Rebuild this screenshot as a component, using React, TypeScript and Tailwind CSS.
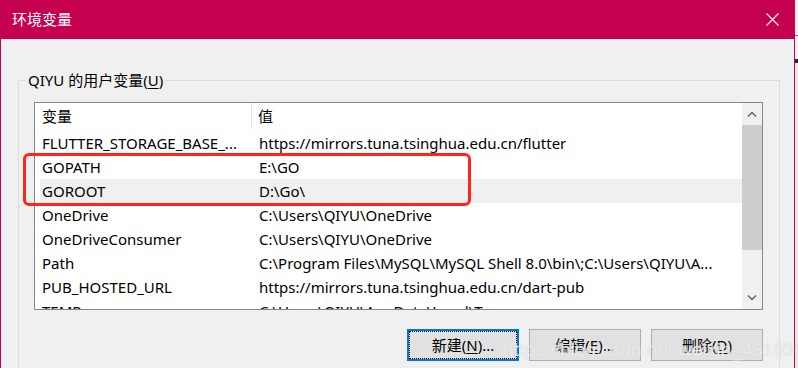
import React from "react";

const rows: { name: string; value: string }[] = [
  { name: "FLUTTER_STORAGE_BASE_...", value: "https://mirrors.tuna.tsinghua.edu.cn/flutter" },
  { name: "GOPATH", value: "E:\\GO" },
  { name: "GOROOT", value: "D:\\Go\\" },
  { name: "OneDrive", value: "C:\\Users\\QIYU\\OneDrive" },
  { name: "OneDriveConsumer", value: "C:\\Users\\QIYU\\OneDrive" },
  { name: "Path", value: "C:\\Program Files\\MySQL\\MySQL Shell 8.0\\bin\\;C:\\Users\\QIYU\\A..." },
  { name: "PUB_HOSTED_URL", value: "https://mirrors.tuna.tsinghua.edu.cn/dart-pub" },
  { name: "TEMP", value: "C:\\Users\\QIYU\\AppData\\Local\\Temp" },
];

const font = "font-['Noto_Sans','Noto_Sans_CJK_SC',sans-serif]";

function Button({ label, focused }: { label: React.ReactNode; focused?: boolean }) {
  return (
    <button
      className={`w-[112px] h-[32px] bg-[#e1e1e1] text-[15px] text-black flex items-center justify-center ${
        focused ? "border-2 border-[#0078d7]" : "border border-[#adadad]"
      }`}
    >
      <span
        className={`flex items-center justify-center w-full h-full ${
          focused ? "border border-dotted border-black" : ""
        }`}
      >
        {label}
      </span>
    </button>
  );
}

export default function App() {
  return (
    <div className={`w-[798px] h-[368px] overflow-hidden flex bg-[#e6e6e6] ${font}`}>
      {/* dialog window */}
      <div className="w-[795px] h-full flex flex-col border-x border-[#c4004f] bg-[#f0f0f0]">
        {/* title bar */}
        <div className="h-[39px] shrink-0 bg-[#c4004f] flex items-center justify-between pl-[11px] pr-[14px]">
          <span className="text-white text-[15px] leading-none">环境变量</span>
          <svg width="13" height="13" viewBox="0 0 13 13" className="mr-[1px]">
            <path d="M0.5 0.5 L12.5 12.5 M12.5 0.5 L0.5 12.5" stroke="white" strokeWidth="1.1" />
          </svg>
        </div>

        {/* group box */}
        <div className="relative ml-[17px] mr-[14px] mt-[41px] border border-[#dcdcdc] border-b-0 flex-1 pl-[15px] pr-[16px] pt-[21px]">
          <span className="absolute left-[7px] top-[-12px] px-[2px] bg-[#f0f0f0] text-[15px] leading-[22px] text-black">
            QIYU 的用户变量(<span className="underline underline-offset-2">U</span>)
          </span>

          {/* list */}
          <div className="h-[208px] border border-[#828790] bg-white flex overflow-hidden">
            <div className="flex-1 pl-[5px] flex flex-col overflow-hidden">
              {/* header */}
              <div className="h-[28px] shrink-0 flex text-[15px] text-black">
                <div className="w-[212px] pl-[2px] border-r border-[#e5e5e5] flex items-center h-[26px]">变量</div>
                <div className="pl-[6px] flex items-center h-[26px]">值</div>
              </div>
              {rows.map((r) => (
                <div
                  key={r.name}
                  className={`h-[24px] shrink-0 flex items-center text-[15px] text-black whitespace-nowrap ${
                    r.name === "GOROOT" ? "bg-[#f0f0f0]" : ""
                  }`}
                >
                  <div className="w-[212px] shrink-0 pl-[2px] overflow-hidden">{r.name}</div>
                  <div className="pl-[7px] overflow-hidden">{r.value}</div>
                </div>
              ))}
            </div>

            {/* scrollbar */}
            <div className="w-[20px] shrink-0 bg-[#f0f0f0] flex flex-col items-stretch">
              <div className="h-[22px] flex items-center justify-center">
                <svg width="10" height="6" viewBox="0 0 10 6">
                  <path d="M1 5.5 L5 1.5 L9 5.5" fill="none" stroke="#606060" strokeWidth="1.4" />
                </svg>
              </div>
              <div className="h-[125px] bg-[#cdcdcd]" />
              <div className="flex-1" />
              <div className="h-[22px] flex items-center justify-center">
                <svg width="10" height="6" viewBox="0 0 10 6">
                  <path d="M1 0.5 L5 4.5 L9 0.5" fill="none" stroke="#606060" strokeWidth="1.4" />
                </svg>
              </div>
            </div>
          </div>

          {/* buttons */}
          <div className="mt-[19px] flex justify-end gap-[10px]">
            <Button focused label={<>新建(<span className="underline underline-offset-2">N</span>)...</>} />
            <Button label={<>编辑(<span className="underline underline-offset-2">E</span>)...</>} />
            <Button label={<>删除(<span className="underline underline-offset-2">D</span>)</>} />
          </div>

          {/* red highlight annotation */}
          <div className="absolute left-[4px] top-[72px] w-[448px] h-[53px] border-[3px] border-[#ff2519] rounded-[6px] pointer-events-none" />

          {/* watermark */}
          <span className="absolute left-[484px] top-[255px] text-[19px] font-['Liberation_Sans',sans-serif] text-white/60 [text-shadow:0_0_1px_#c8c8c8] whitespace-nowrap pointer-events-none">
            https://blog.csdn.net/weixin_43103088
          </span>
        </div>
      </div>
      {/* desktop edge */}
      <div className="flex-1 flex flex-col">
        <div className="h-[35px] bg-[#f0f0f0]" />
        <div className="h-[1px] bg-[#3b7bd1]" />
        <div className="h-[23px] bg-[#f0f0f0]" />
        <div className="h-[4px] bg-[#1e2b3c]" />
        <div className="flex-1 bg-[#e8e8e8]" />
      </div>
    </div>
  );
}
